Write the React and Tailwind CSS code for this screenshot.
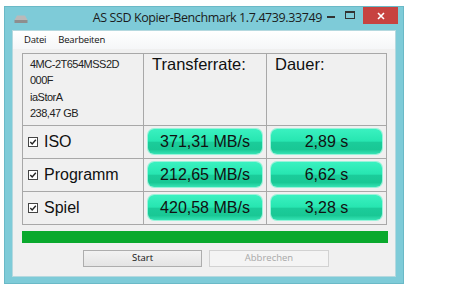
import React from "react";

const pill =
  "h-[25px] rounded-[6px] flex items-center justify-center text-[16px] text-[#111] shadow-[0_0_0_1px_#9af3da] bg-[linear-gradient(to_bottom,#3af1c0_0%,#27e6b1_48%,#1bcc9a_54%,#19c895_82%,#35e3b4_100%)]";

function Check() {
  return (
    <svg width="10" height="10" viewBox="0 0 10 10" className="shrink-0">
      <rect x="0.5" y="0.5" width="9" height="9" fill="#fff" stroke="#444" />
      <path d="M2.3 5 L4.2 7 L7.8 2.8" fill="none" stroke="#222" strokeWidth="1.4" />
    </svg>
  );
}

function Row({ label, rate, time }) {
  return (
    <>
      <div className="h-[33px] border-t border-r border-[#a8a8a8] flex items-center pl-[5px] gap-[6px]">
        <Check />
        <span className="text-[16px] text-[#111]">{label}</span>
      </div>
      <div className="h-[33px] border-t border-r border-[#a8a8a8] px-[4px] pt-[3px]">
        <div className={pill}>{rate}</div>
      </div>
      <div className="h-[33px] border-t border-[#a8a8a8] px-[4px] pt-[3px]">
        <div className={pill}>{time}</div>
      </div>
    </>
  );
}

export default function App() {
  return (
    <div className="w-[472px] h-[293px] bg-white pt-[7px] pl-[5px] font-['Liberation_Sans',Arial,sans-serif]">
      <div className="w-[398px] h-[276px] bg-[#7ecbd8] flex flex-col shadow-[0_0_0_1px_#6ab9c7]">
        {/* title bar */}
        <div className="h-[23px] grid grid-cols-[1fr_auto_1fr] items-start">
          <div className="pl-[9px] pt-[8px]">
            <svg width="14" height="8" viewBox="0 0 14 8">
              <path d="M3 0.5 H11 L13.5 5 H0.5 Z" fill="#b9b9b9" />
              <rect x="0.5" y="5" width="13" height="3" fill="#8e8e8e" />
            </svg>
          </div>
          <div className="pl-[28px] pt-[2px] text-[12.5px] text-[#1b1b1b] whitespace-nowrap font-['Open_Sans','Noto_Sans',sans-serif] tracking-[-0.4px]">
            AS SSD Kopier-Benchmark 1.7.4739.33749
          </div>
          <div className="flex justify-end items-start pr-[5px]">
            <div className="w-[18px] h-[17px] flex items-center justify-center mr-[1px]">
              <div className="w-[8px] h-[2px] bg-[#333] mt-[3px]" />
            </div>
            <div className="w-[18px] h-[17px] flex items-center justify-center mr-[4px]">
              <div className="w-[10px] h-[8px] border border-[#333] border-t-2 -mt-[2px]" />
            </div>
            <div className="w-[35px] h-[17px] bg-[#c74340] flex items-center justify-center">
              <svg width="8" height="8" viewBox="0 0 8 8">
                <path d="M1 1 L7 7 M7 1 L1 7" stroke="#fff" strokeWidth="1.6" />
              </svg>
            </div>
          </div>
        </div>

        {/* client */}
        <div className="mx-[7px] mb-[6px] flex-1 bg-[#f0f0f0] flex flex-col border border-[#b5d9df]">
          <div className="h-[18px] bg-[linear-gradient(to_bottom,#ffffff,#f5f6f8)] flex items-center pl-[11px] gap-[12px] text-[9.5px] tracking-[-0.2px] text-[#111] font-['Open_Sans','Noto_Sans',sans-serif]">
            <span>Datei</span>
            <span>Bearbeiten</span>
          </div>

          <div className="mt-[4px] ml-[9px] w-[365px] border border-[#a8a8a8] grid grid-cols-[121px_123px_119px]">
            <div className="h-[71px] border-r border-[#a8a8a8] pl-[7px] pt-[2px] text-[11px] leading-[16.3px] text-[#222] tracking-[-0.5px]">
              <div>4MC-2T654MSS2D</div>
              <div>000F</div>
              <div>iaStorA</div>
              <div>238,47 GB</div>
            </div>
            <div className="h-[71px] border-r border-[#a8a8a8] pl-[8px] text-[16.5px] leading-[20px] text-[#111]">
              Transferrate:
            </div>
            <div className="h-[71px] pl-[8px] text-[16.5px] leading-[20px] text-[#111]">Dauer:</div>
            <Row label="ISO" rate="371,31 MB/s" time="2,89 s" />
            <Row label="Programm" rate="212,65 MB/s" time="6,62 s" />
            <Row label="Spiel" rate="420,58 MB/s" time="3,28 s" />
          </div>

          <div className="mt-[6px] ml-[9px] w-[366px] h-[12px] bg-[#0aa92d]" />

          <div className="mt-[7px] ml-[70px] flex gap-[7px] font-['Open_Sans','Noto_Sans',sans-serif] text-[9.5px]">
            <div className="w-[119px] h-[17px] border border-[#adadad] bg-[linear-gradient(to_bottom,#f2f2f2,#e4e4e4)] flex items-center justify-center text-[#111]">
              Start
            </div>
            <div className="w-[120px] h-[17px] border border-[#d2d2d2] bg-[#f4f4f4] flex items-center justify-center text-[#a8a8a8]">
              Abbrechen
            </div>
          </div>
        </div>
      </div>
    </div>
  );
}
